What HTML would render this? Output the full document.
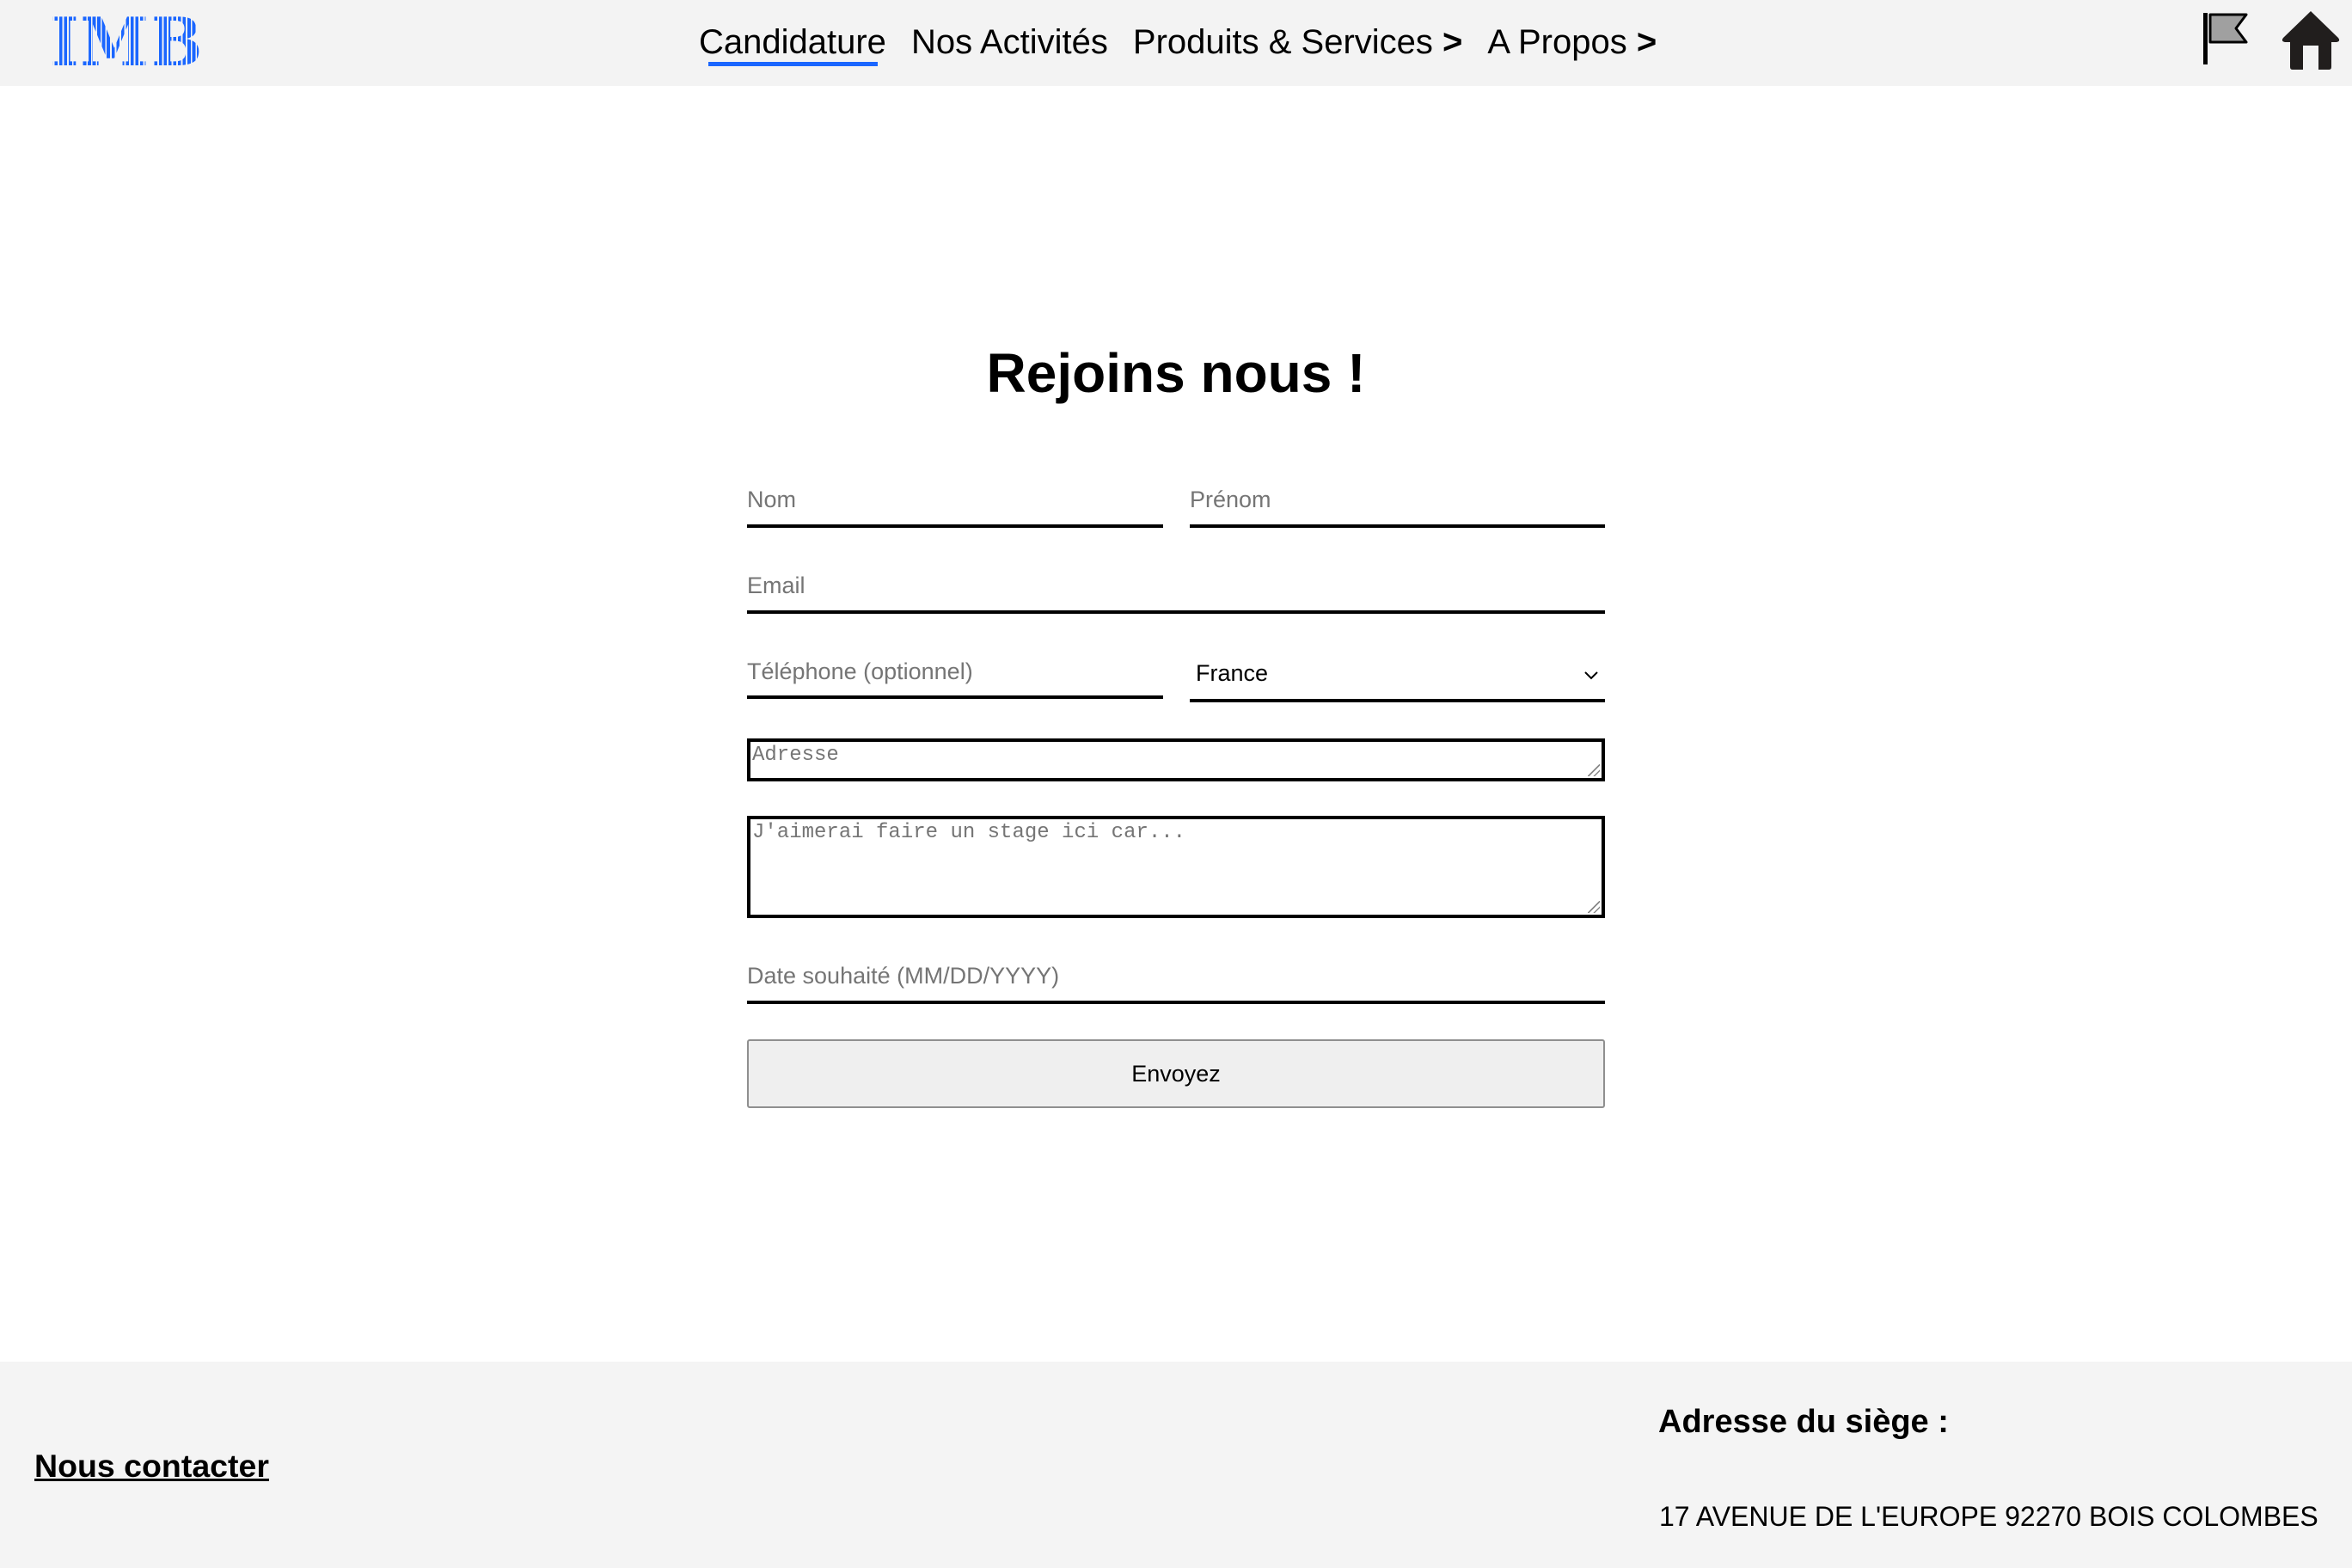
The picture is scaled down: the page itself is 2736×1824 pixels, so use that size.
<!DOCTYPE html>
<html><head><meta charset="utf-8"><style>
*{margin:0;padding:0;box-sizing:border-box}
body{width:2736px;height:1824px;background:#fff;font-family:"Liberation Sans",sans-serif;position:relative;overflow:hidden}
.nav{position:absolute;left:0;top:0;width:2736px;height:100px;background:#f3f3f3}
.logo{position:absolute;left:58px;top:8px;font-family:"DejaVu Serif",serif;font-weight:bold;font-size:78px;line-height:84px;letter-spacing:2px;color:transparent;
background:repeating-linear-gradient(90deg,#1a66ff 0 4px,#f3f3f3 4px 6px);-webkit-background-clip:text;background-clip:text;transform:scaleX(0.92);transform-origin:left}
.menu{position:absolute;top:27px;left:813px;font-size:40px;color:#000;white-space:nowrap}
.menu span{margin-right:29px}
.menu b{font-weight:bold}
.ul{position:absolute;left:824px;top:72px;width:197px;height:5px;background:#1a66ff}
.lbl{position:absolute;color:#757575;font-size:27px}
.line{position:absolute;height:4px;background:#000}
.box{position:absolute;border:4px solid #000;background:#fff;font-family:"Liberation Mono",monospace;font-size:24px;color:#757575;padding:2px 0 0 2px}
.grip{position:absolute;right:2px;bottom:2px;width:14px;height:14px;background:linear-gradient(135deg,transparent 0 48%,#888 48% 56%,transparent 56% 72%,#888 72% 80%,transparent 80%)}
</style></head><body>
<div class="nav">
<div class="logo">IMB</div>
<div class="menu"><span>Candidature</span><span>Nos Activités</span><span>Produits &amp; Services <b>&gt;</b></span><span>A Propos <b>&gt;</b></span></div>
<div class="ul"></div>
<svg style="position:absolute;left:2558px;top:14px" width="60" height="64" viewBox="0 0 60 64">
<rect x="5" y="1" width="5" height="60" fill="#000"/>
<path d="M13 3H55L43 19L55 35H13Z" fill="#a0a0a0" stroke="#000" stroke-width="3" stroke-linejoin="round"/>
</svg>
<svg style="position:absolute;left:2652px;top:10px" width="72" height="72" viewBox="0 0 72 72">
<path d="M36 3L4 34Q1 38 6 39H12V68Q12 71 15 71H27V43H45V71H57Q60 71 60 68V39H66Q71 38 68 34Z" fill="#211e1d"/>
</svg>
</div>
<div style="position:absolute;top:397px;left:0;width:2736px;text-align:center;font-weight:bold;font-size:64px">Rejoins nous !</div>
<div class="lbl" style="left:869px;top:566px">Nom</div>
<div class="line" style="left:869px;top:610px;width:484px"></div>
<div class="lbl" style="left:1384px;top:566px">Prénom</div>
<div class="line" style="left:1384px;top:610px;width:483px"></div>
<div class="lbl" style="left:869px;top:666px">Email</div>
<div class="line" style="left:869px;top:710px;width:998px"></div>
<div class="lbl" style="left:869px;top:766px">Téléphone (optionnel)</div>
<div class="line" style="left:869px;top:809px;width:484px"></div>
<div class="lbl" style="left:1391px;top:768px;color:#000">France</div>
<svg style="position:absolute;left:1842px;top:780px" width="18" height="12" viewBox="0 0 18 12"><path d="M2 2L9 9L16 2" fill="none" stroke="#000" stroke-width="2"/></svg>
<div class="line" style="left:1384px;top:813px;width:483px"></div>
<div class="box" style="left:869px;top:859px;width:998px;height:50px">Adresse<div class="grip"></div></div>
<div class="box" style="left:869px;top:949px;width:998px;height:119px">J'aimerai faire un stage ici car...<div class="grip"></div></div>
<div class="lbl" style="left:869px;top:1120px">Date souhaité (MM/DD/YYYY)</div>
<div class="line" style="left:869px;top:1164px;width:998px"></div>
<div style="position:absolute;left:869px;top:1209px;width:998px;height:80px;background:#efefef;border:2px solid #8f8f8f;border-radius:3px;text-align:center;line-height:76px;font-size:27px">Envoyez</div>
<div style="position:absolute;left:0;top:1584px;width:2736px;height:240px;background:#f4f4f4"></div>
<div style="position:absolute;left:40px;top:1684px;font-size:37.5px;font-weight:bold;text-decoration:underline;text-decoration-thickness:3px">Nous contacter</div>
<div style="position:absolute;left:1929px;top:1633px;font-size:38px;font-weight:bold">Adresse du siège :</div>
<div style="position:absolute;left:1930px;top:1746px;font-size:32px;white-space:nowrap">17 AVENUE DE L'EUROPE 92270 BOIS COLOMBES</div>
</body></html>
